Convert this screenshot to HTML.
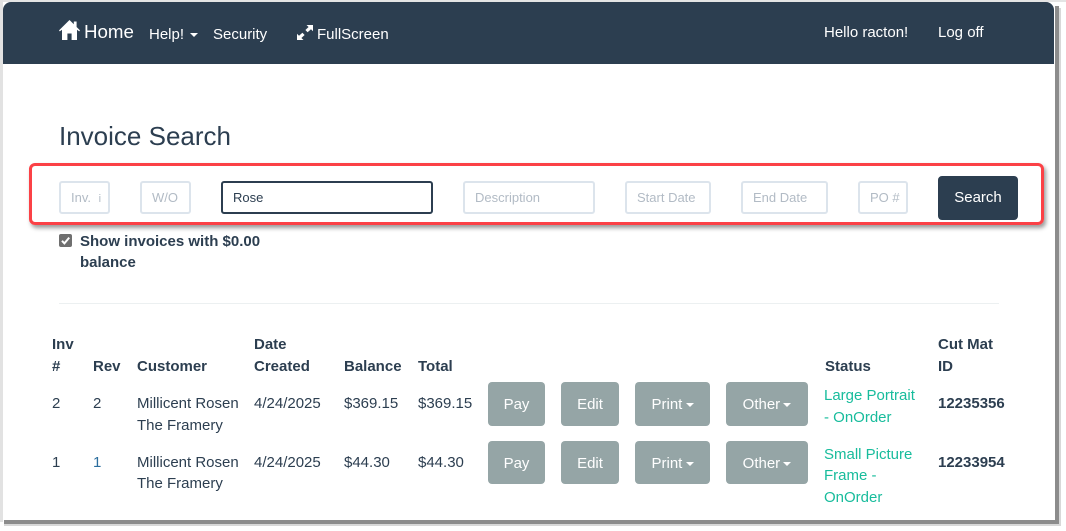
<!DOCTYPE html>
<html><head><meta charset="utf-8"><style>
html,body{margin:0;padding:0;background:#fff;width:1066px;height:531px;overflow:hidden}
body{position:relative;font-family:"Liberation Sans",sans-serif;font-size:15px;color:#2c3e50}
.a,.t,.b,.i{position:absolute}
.t{white-space:nowrap;line-height:21.4px}
.nav{color:#fff}
.h{font-weight:700}
.b{background:#95a5a6;color:#fff;border-radius:4px;text-align:center;height:44px;line-height:45px;white-space:nowrap}
.i{box-sizing:border-box;height:33px;border:2px solid #dce4ec;border-radius:3px;color:#b2bbc5;font-size:13px;line-height:29px;padding-left:10px;white-space:nowrap;overflow:hidden;background:#fff}
.car{display:inline-block;width:0;height:0;border-left:4px solid transparent;border-right:4px solid transparent;border-top:4px solid #fff;vertical-align:middle;margin-left:-1px}
.g{color:#18bc9c}
</style></head><body>
<div class="a" style="left:0;top:0;width:1066px;height:2px;background:#e4e4e4"></div>
<div class="a" style="left:0;top:0;width:3px;height:522px;background:#e2e2e2"></div>
<div class="a" style="left:1055px;top:6px;width:4px;height:518px;background:#8c8c8c"></div>
<div class="a" style="left:1059px;top:8px;width:2px;height:516px;background:#d8d8d8"></div>
<div class="a" style="left:4px;top:520px;width:1055px;height:4px;background:#8c8c8c"></div>
<div class="a" style="left:4px;top:524px;width:1057px;height:2px;background:#d8d8d8"></div>
<div class="a" style="left:3px;top:2px;width:1052px;height:518px;background:#fff;border-radius:8px 8px 0 0"></div>
<div class="a" style="left:3px;top:2px;width:1051px;height:62px;background:#2c3e50;border-radius:8px 8px 0 0"></div>

<svg class="a" style="left:59px;top:20px" width="21" height="20" viewBox="0 0 21 20"><path d="M10.5 0 L0 10.4 L0.8 11.4 L3 9.8 V20 H8.4 V13.5 H12.6 V20 H18 V9.8 L20.2 11.4 L21 10.4 L17.6 7 V1.5 H14.8 V4.2 Z" fill="#fff"/></svg>
<div class="t nav" style="left:84px;top:21px;font-size:18.7px">Home</div>
<div class="t nav" style="left:149px;top:24px">Help! <span class="car" style="margin-left:2px"></span></div>
<div class="t nav" style="left:213px;top:24px">Security</div>
<svg class="a" style="left:297px;top:25px" width="16" height="15" viewBox="0 0 16 15"><path d="M16 0 H9.5 L11.6 2 L8.4 5 L10.6 7.2 L14 4.2 L16 6.2 Z M0 15 H6.5 L4.4 13 L7.6 10 L5.4 7.8 L2 10.8 L0 8.8 Z" fill="#fff"/></svg>
<div class="t nav" style="left:317px;top:24px">FullScreen</div>
<div class="t nav" style="left:824px;top:22px">Hello racton!</div>
<div class="t nav" style="left:938px;top:22px">Log off</div>

<div class="t" style="left:59px;top:120px;font-size:26px;line-height:32px">Invoice Search</div>

<div class="a" style="left:29px;top:163px;box-sizing:border-box;width:1015px;height:62px;border:3px solid #fb4146;border-radius:6px;box-shadow:2px 3px 4px rgba(0,0,0,.4)"></div>

<div class="i" style="left:59px;top:181px;width:51px">Inv. <span style="font-size:11px;margin-left:4px">i</span></div>
<div class="i" style="left:140px;top:181px;width:51px">W/O</div>
<div class="i" style="left:221px;top:181px;width:212px;border-color:#2c3e50;color:#2c3e50">Rose</div>
<div class="i" style="left:463px;top:181px;width:132px">Description</div>
<div class="i" style="left:625px;top:181px;width:86px">Start Date</div>
<div class="i" style="left:741px;top:181px;width:87px">End Date</div>
<div class="i" style="left:858px;top:181px;width:50px">PO #</div>
<div class="a" style="left:938px;top:176px;width:80px;height:44px;line-height:43px;text-align:center;background:#2c3e50;color:#fff;border-radius:4px">Search</div>

<div class="a" style="left:59px;top:234px;width:13px;height:13px;background:#6f6f6f;border-radius:2px"></div>
<svg class="a" style="left:59px;top:234px" width="13" height="13" viewBox="0 0 13 13"><path d="M3 6.8 L5.4 9.4 L10.2 3.6" stroke="#fff" stroke-width="2" fill="none"/></svg>
<div class="t h" style="left:80px;top:231px">Show invoices with $0.00</div>
<div class="t h" style="left:80px;top:252px">balance</div>

<div class="a" style="left:59px;top:303px;width:940px;height:1px;background:#ecf0f1"></div>

<div class="t h" style="left:52px;top:334px">Inv</div>
<div class="t h" style="left:52px;top:356px">#</div>
<div class="t h" style="left:93px;top:356px">Rev</div>
<div class="t h" style="left:137px;top:356px">Customer</div>
<div class="t h" style="left:254px;top:334px">Date</div>
<div class="t h" style="left:254px;top:356px">Created</div>
<div class="t h" style="left:344px;top:356px">Balance</div>
<div class="t h" style="left:418px;top:356px">Total</div>
<div class="t h" style="left:825px;top:356px">Status</div>
<div class="t h" style="left:938px;top:334px">Cut Mat</div>
<div class="t h" style="left:938px;top:356px">ID</div>

<div class="t" style="left:52px;top:393px">2</div>
<div class="t" style="left:93px;top:393px">2</div>
<div class="t" style="left:137px;top:393px">Millicent Rosen</div>
<div class="t" style="left:137px;top:415px">The Framery</div>
<div class="t" style="left:254px;top:393px">4/24/2025</div>
<div class="t" style="left:344px;top:393px">$369.15</div>
<div class="t" style="left:418px;top:393px">$369.15</div>
<div class="b" style="left:488px;top:382px;width:57px">Pay</div>
<div class="b" style="left:561px;top:382px;width:58px">Edit</div>
<div class="b" style="left:635px;top:382px;width:75px">Print <span class="car"></span></div>
<div class="b" style="left:726px;top:382px;width:82px">Other <span class="car"></span></div>
<div class="t g" style="left:824px;top:385px">Large Portrait</div>
<div class="t g" style="left:824px;top:407px">- OnOrder</div>
<div class="t h" style="left:938px;top:393px">12235356</div>

<div class="t" style="left:52px;top:452px">1</div>
<div class="t" style="left:93px;top:452px;color:#2c6e9e">1</div>
<div class="t" style="left:137px;top:452px">Millicent Rosen</div>
<div class="t" style="left:137px;top:473px">The Framery</div>
<div class="t" style="left:254px;top:452px">4/24/2025</div>
<div class="t" style="left:344px;top:452px">$44.30</div>
<div class="t" style="left:418px;top:452px">$44.30</div>
<div class="b" style="left:488px;top:441px;width:57px;height:43px">Pay</div>
<div class="b" style="left:561px;top:441px;width:58px;height:43px">Edit</div>
<div class="b" style="left:635px;top:441px;width:75px;height:43px">Print <span class="car"></span></div>
<div class="b" style="left:726px;top:441px;width:82px;height:43px">Other <span class="car"></span></div>
<div class="t g" style="left:824px;top:444px">Small Picture</div>
<div class="t g" style="left:824px;top:465px">Frame -</div>
<div class="t g" style="left:824px;top:487px">OnOrder</div>
<div class="t h" style="left:938px;top:452px">12233954</div>
</body></html>
